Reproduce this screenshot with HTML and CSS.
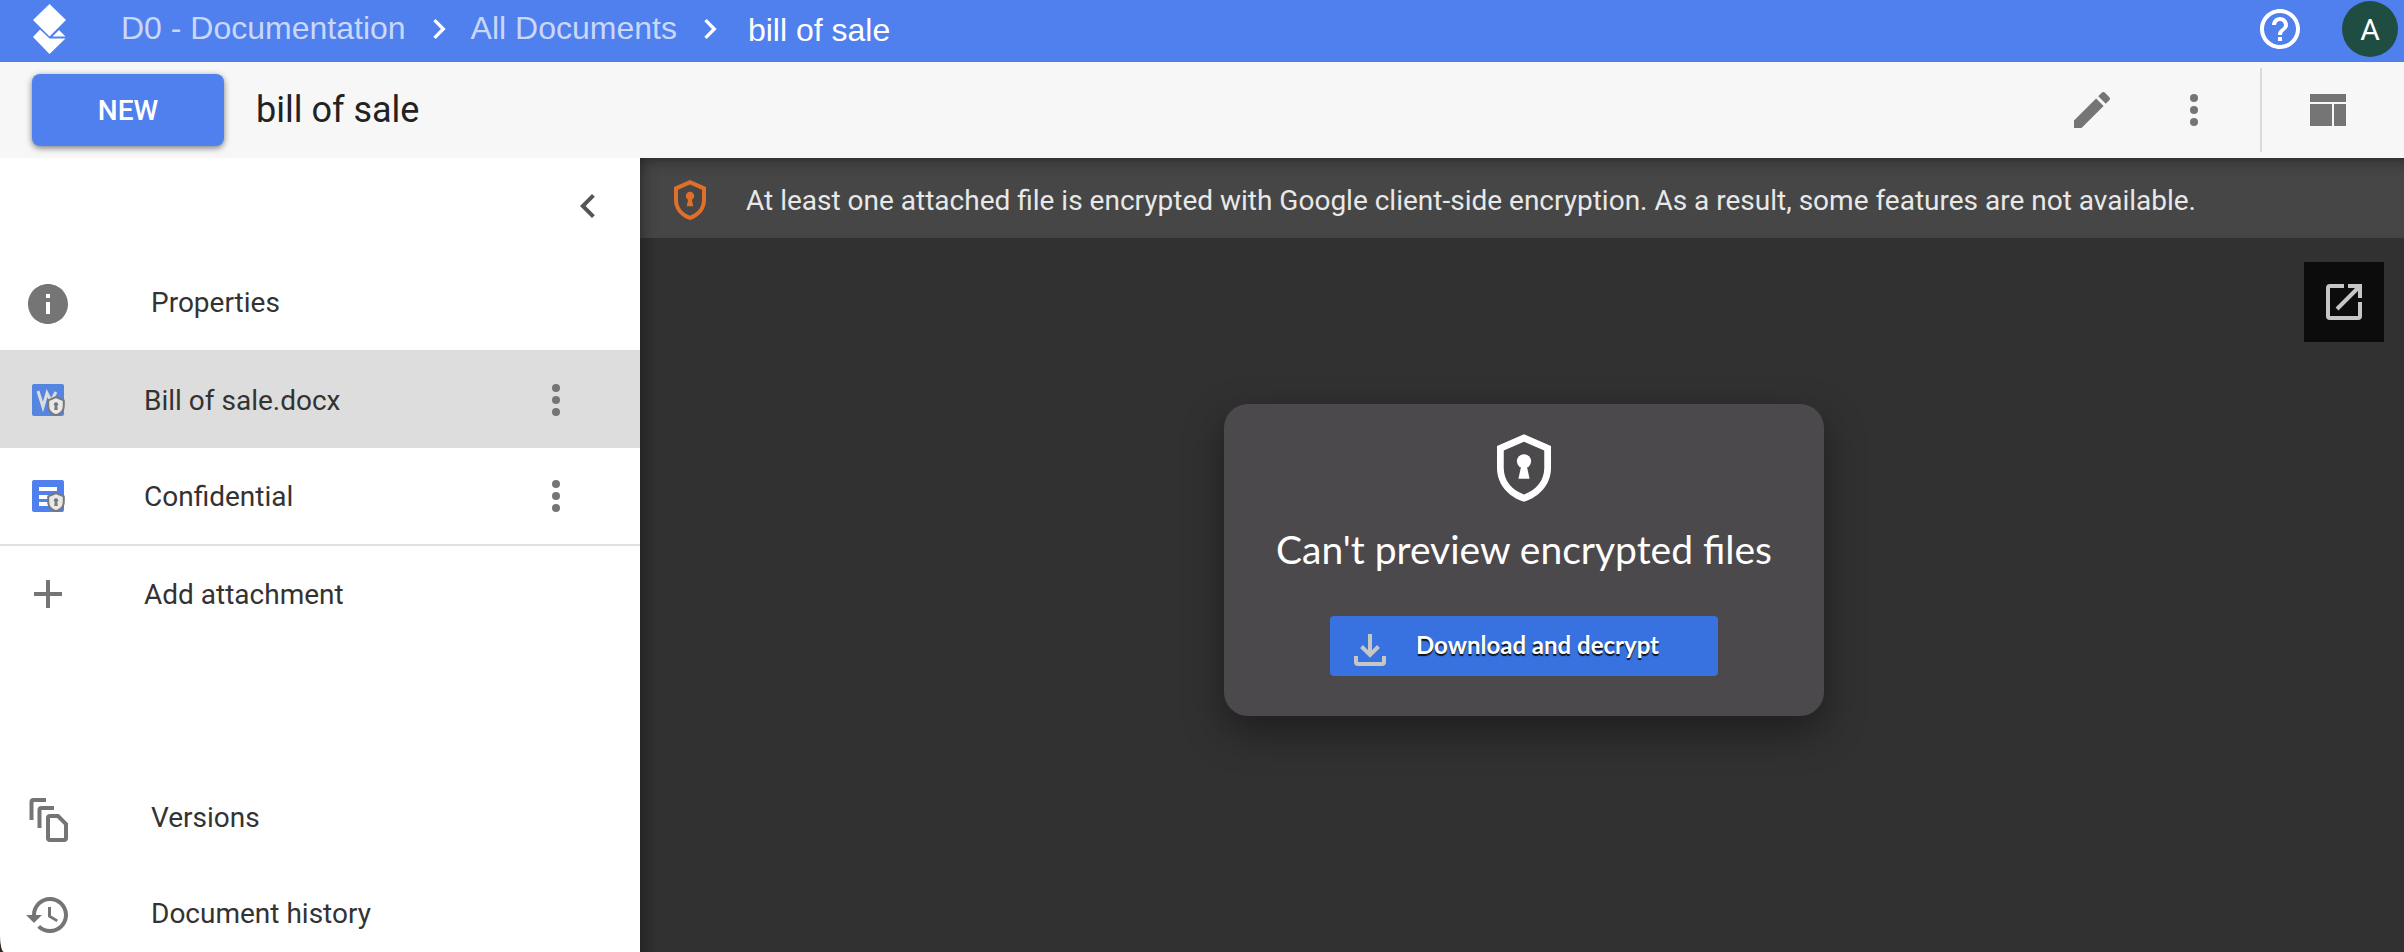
FILE: index.html
```html
<!DOCTYPE html>
<html lang="en">
<head>
    <meta charset="UTF-8">
    <meta name="viewport" content="width=device-width, initial-scale=1.0">
    <title>bill of sale</title>
    <link rel="stylesheet" href="styles.css">
</head>
<body>
    <!-- Shared icon shapes -->
    <svg class="sprite" aria-hidden="true">
        <symbol id="chevron" viewBox="0 0 24 24"><path d="M10 6L8.590 7.410 13.170 12l-4.580 4.590L10 18l6-6z"/></symbol>
        <symbol id="dots" viewBox="0 0 24 24"><circle cx="12" cy="6" r="2"/><circle cx="12" cy="12" r="2"/><circle cx="12" cy="18" r="2"/></symbol>
        <symbol id="shield" viewBox="0 0 32 40">
            <path fill-rule="evenodd" d="M16 0L32 7V20C32 29.500 25.500 37 16 40C6.500 37 0 29.500 0 20V7ZM16 4.400L4 9.700V20C4 27.500 8.700 33 16 35.700C23.300 33 28 27.500 28 20V9.700Z"/>
            <circle cx="16" cy="16" r="4.200"/>
            <path d="M14.500 18h3l1.800 8.300h-6.600z"/>
        </symbol>
        <symbol id="badge" viewBox="0 0 16 18">
            <path d="M8 1L15 4V9C15 13 12 16 8 17.300C4 16 1 13 1 9V4Z" fill="#e8e8e8" stroke="#777" stroke-width="1.800"/>
            <circle cx="8" cy="7.500" r="1.900" fill="#777"/><path d="M7 8h2l.6 4.500H6.400z" fill="#777"/>
        </symbol>
    </svg>

    <header class="topbar">
        <svg class="logo" viewBox="0 0 33 50"><path d="M16.500 0L33 16 16.500 32.500 0 16zM7 25.500L0 33 16.500 50 32.500 34.500H16.500zM26 26l6.500 6.500H19.500z"/></svg>
        <nav class="breadcrumb" aria-label="Breadcrumb">
            <a href="#">D0 - Documentation</a>
            <svg class="separator"><use href="#chevron"/></svg>
            <a href="#">All Documents</a>
            <svg class="separator"><use href="#chevron"/></svg>
            <span class="current">bill of sale</span>
        </nav>
        <button class="icon-button help" aria-label="Help">
            <svg viewBox="0 0 24 24"><path d="M11 18h2v-2h-2v2zm1-16C6.480 2 2 6.480 2 12s4.480 10 10 10 10-4.480 10-10S17.520 2 12 2zm0 18c-4.410 0-8-3.590-8-8s3.590-8 8-8 8 3.590 8 8-3.590 8-8 8zm0-14c-2.210 0-4 1.790-4 4h2c0-1.100.9-2 2-2s2 .9 2 2c0 2-3 1.750-3 5h2c0-2.250 3-2.500 3-5 0-2.210-1.790-4-4-4z"/></svg>
        </button>
        <button class="avatar">A</button>
    </header>

    <div class="toolbar">
        <button class="new-button">NEW</button>
        <h1>bill of sale</h1>
        <div class="tools">
            <button class="icon-button edit" aria-label="Edit">
                <svg viewBox="0 0 24 24"><path d="M3 17.250V21h3.750L17.810 9.940l-3.750-3.750L3 17.250zM20.710 7.040c.39-.39.39-1.020 0-1.410l-2.340-2.340c-.39-.39-1.020-.39-1.410 0l-1.830 1.830 3.750 3.750 1.830-1.830z"/></svg>
            </button>
            <button class="icon-button" aria-label="More"><svg><use href="#dots"/></svg></button>
            <span class="divider"></span>
            <button class="icon-button" aria-label="Layout">
                <svg viewBox="0 0 24 24"><path d="M3 4h18v4H3zM3 9h11v11H3zM15 9h6v11h-6z"/></svg>
            </button>
        </div>
    </div>

    <main class="content">
        <aside class="sidebar">
            <div class="collapse">
                <button class="icon-button" aria-label="Collapse"><svg class="flipped"><use href="#chevron"/></svg></button>
            </div>
            <ul class="menu">
                <li class="main-item">
                    <button class="item">
                        <svg viewBox="0 0 24 24"><path d="M12 2C6.480 2 2 6.480 2 12s4.480 10 10 10 10-4.480 10-10S17.520 2 12 2zm1 15h-2v-6h2v6zm0-8h-2V7h2v2z"/></svg>
                        Properties
                    </button>
                </li>
                <li class="selected">
                    <button class="item">
                        <svg viewBox="0 0 48 48">
                            <rect x="8" y="8" width="32" height="32" rx="2" fill="#5585e0"/>
                            <path d="M14 15l5 16 4-14 4 8 5-9" fill="none" stroke="#ddd" stroke-width="3"/>
                            <use href="#badge" x="23" y="20" width="18" height="20"/>
                        </svg>
                        Bill of sale.docx
                    </button>
                    <button class="icon-button more" aria-label="More"><svg><use href="#dots"/></svg></button>
                </li>
                <li class="last-file">
                    <button class="item">
                        <svg viewBox="0 0 48 48">
                            <rect x="8" y="8" width="32" height="32" rx="2" fill="#4f80ee"/>
                            <path d="M15 17h18M15 25h12M15 32h9" fill="none" stroke="#fff" stroke-width="4"/>
                            <use href="#badge" x="23" y="20" width="18" height="20"/>
                        </svg>
                        Confidential
                    </button>
                    <button class="icon-button more" aria-label="More"><svg><use href="#dots"/></svg></button>
                </li>
                <li>
                    <button class="item">
                        <svg viewBox="0 0 48 48"><path d="M22 10h4v12h12v4H26v12h-4V26H10v-4h12z"/></svg>
                        Add attachment
                    </button>
                </li>
            </ul>
            <ul class="menu">
                <li class="main-item">
                    <button class="item">
                        <svg viewBox="0 0 48 48">
                            <path d="M7.500 25V7q0-2 2-2H22M15.500 33V15q0-2 2-2H30M26 21h8l8 8v14q0 2-2 2H26q-2 0-2-2V23q0-2 2-2z" fill="none" stroke="#757575" stroke-width="4"/>
                        </svg>
                        Versions
                    </button>
                </li>
                <li class="main-item">
                    <button class="item">
                        <svg viewBox="0 0 24 24"><path d="M13 3c-4.970 0-9 4.030-9 9H1l3.890 3.890.07.14L9 12H6c0-3.870 3.130-7 7-7s7 3.130 7 7-3.130 7-7 7c-1.930 0-3.680-.79-4.940-2.060l-1.420 1.420C8.270 19.990 10.510 21 13 21c4.970 0 9-4.030 9-9s-4.030-9-9-9zm-1 5v5l4.280 2.540.72-1.210-3.500-2.080V8H12z"/></svg>
                        Document history
                    </button>
                </li>
            </ul>
        </aside>

        <section class="viewer">
            <div class="banner">
                <svg><use href="#shield"/></svg>
                <p>At least one attached file is encrypted with Google client-side encryption. As a result, some features are not available.</p>
            </div>
            <div class="stage">
                <button class="open-button" aria-label="Open in new window">
                    <svg viewBox="0 0 36 36">
                        <path d="M18 2H4Q2 2 2 4V32Q2 34 4 34H32Q34 34 34 32V18M22 2H34V14M33 3L11 25" fill="none" stroke="#c5c7c5" stroke-width="4"/>
                    </svg>
                </button>
                <div class="card">
                    <svg class="card-icon"><use href="#shield"/></svg>
                    <h2>Can't preview encrypted files</h2>
                    <button class="download">
                        <svg viewBox="0 0 32 32"><path d="M2 22v6q0 2 2 2h24q2 0 2-2v-6M16 0v21M7.500 12.500L16 21l8.500-8.500" fill="none" stroke="#c5c7c5" stroke-width="4"/></svg>
                        Download and decrypt
                    </button>
                </div>
            </div>
        </section>
    </main>
</body>
</html>
```

FILE: styles.css
```css
* {
    box-sizing: border-box;
}

body {
    font-family: Roboto, "Liberation Sans", sans-serif;
    margin: 0;
    height: 100vh;
    display: flex;
    flex-direction: column;
    overflow: hidden;
    background-color: #2b2520;
    color: #333;
}

h1, h2, p, ul {
    margin: 0;
    padding: 0;
    font-weight: 400;
}

button {
    font-family: inherit;
    border: none;
    padding: 0;
    background: none;
    color: inherit;
    cursor: pointer;
}

svg {
    display: block;
    flex: none;
}

.sprite {
    position: absolute;
    width: 0;
    height: 0;
}

.icon-button svg {
    width: 48px;
    height: 48px;
    fill: #757575;
}

/* Top bar */
.topbar {
    display: flex;
    align-items: center;
    height: 62px;
    flex: none;
    padding: 0 6px 4px 33px;
    background-color: #4f80ee;
    color: #fff;
}

.logo {
    width: 33px;
    height: 50px;
    margin-right: 55px;
    fill: #fff;
}

.breadcrumb {
    display: flex;
    align-items: center;
    font-family: "Liberation Sans", Arial, sans-serif;
    font-size: 32px;
    line-height: 36px;
}

.breadcrumb a {
    color: #c9d8fa;
    text-decoration: none;
    padding-bottom: 2px;
}

.separator {
    width: 40px;
    height: 40px;
    margin: 0 12px 0 13px;
    fill: #fff;
}

.current {
    padding: 2px 0 0 6px;
}

.help {
    margin-left: auto;
}

.help svg {
    fill: #fff;
}

.avatar {
    width: 56px;
    height: 56px;
    margin-left: 38px;
    border-radius: 50%;
    background-color: #204d42;
    font-size: 30px;
}

/* Toolbar */
.toolbar {
    display: flex;
    align-items: center;
    height: 96px;
    flex: none;
    padding: 0 52px 0 32px;
    background-color: #f7f7f7;
}

.new-button {
    width: 192px;
    height: 72px;
    margin-right: 32px;
    border-radius: 8px;
    background-color: #4f80ee;
    box-shadow: 0 2px 6px rgba(0, 0, 0, 0.5);
    color: #fff;
    font-size: 28px;
    font-weight: 500;
}

h1 {
    font-size: 36px;
    color: #222;
}

.tools {
    display: flex;
    align-items: center;
    gap: 42px;
    margin-left: auto;
}

.edit {
    margin-right: 12px;
}

.divider {
    width: 2px;
    height: 84px;
    background-color: #dadada;
}

/* Sidebar */
.content {
    display: flex;
    flex: 1;
    min-height: 0;
}

.sidebar {
    width: 640px;
    flex: none;
    overflow: hidden;
    background-color: #fff;
    border-bottom-left-radius: 4px 16px;
}

.collapse {
    display: flex;
    align-items: center;
    justify-content: flex-end;
    height: 96px;
    padding-right: 28px;
}

.collapse svg {
    fill: #555;
}

.flipped {
    transform: scaleX(-1);
}

.menu {
    list-style: none;
    margin-bottom: 127px;
}

.menu li {
    display: flex;
    align-items: center;
}

.item {
    display: flex;
    align-items: center;
    gap: 72px;
    flex: 1;
    height: 96px;
    padding-left: 24px;
    font-size: 28px;
    text-align: left;
}

.item svg {
    width: 48px;
    height: 48px;
    fill: #757575;
}

.main-item .item {
    gap: 79px;
}

.main-item svg {
    margin-top: 4px;
}

.menu .selected {
    height: 98px;
    padding-top: 2px;
    background-color: #ddd;
}

.last-file {
    border-bottom: 2px solid #e0e0e0;
}

.more {
    margin-right: 60px;
}

/* Viewer */
.viewer {
    display: flex;
    flex-direction: column;
    flex: 1;
    background-color: #313131;
}

.banner {
    display: flex;
    align-items: center;
    gap: 40px;
    height: 80px;
    padding: 4px 34px 0;
    background-color: #464646;
    box-shadow: inset 16px 0 16px -16px #222, inset 0 16px 16px -16px #222;
    color: #e8e8e8;
    font-size: 28px;
}

.banner svg {
    width: 32px;
    height: 40px;
    fill: #e06f2a;
}

.stage {
    position: relative;
    flex: 1;
    padding: 166px 0 0 4px;
    background-image: linear-gradient(to right, #262626, #313131 16px);
}

.open-button {
    position: absolute;
    top: 24px;
    right: 20px;
    width: 80px;
    height: 80px;
    padding: 22px;
    background-color: #0c0c0c;
}

.card {
    display: flex;
    flex-direction: column;
    align-items: center;
    width: 600px;
    margin: 0 auto;
    padding: 30px 0 40px;
    border-radius: 24px;
    background-color: #4c494c;
    box-shadow: 0 16px 40px rgba(0, 0, 0, 0.4);
    color: #fff;
}

.card-icon {
    width: 54px;
    height: 68px;
    fill: #fff;
}

h2 {
    margin: 23px 0 43px;
    font-family: Lato, sans-serif;
    font-size: 39px;
    line-height: 48px;
}

.download {
    display: flex;
    align-items: center;
    gap: 30px;
    width: 388px;
    height: 60px;
    padding: 0 0 4px 24px;
    border-radius: 4px;
    background-color: #3871e0;
    font-family: Lato, sans-serif;
    font-size: 24px;
    font-weight: 700;
    text-shadow: 0 2px 1px #111;
}

.download svg {
    width: 32px;
    height: 32px;
    margin-top: 12px;
}
```
